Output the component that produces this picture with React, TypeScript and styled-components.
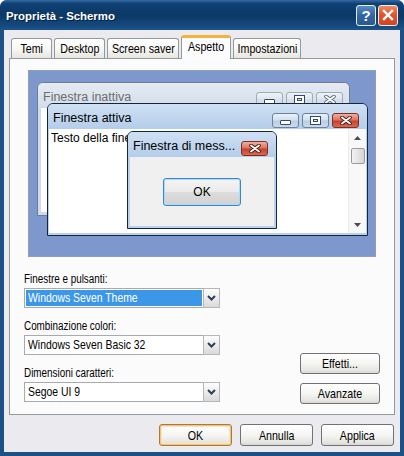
import React from "react";
import styled, { createGlobalStyle, css } from "styled-components";

type Kind = "inactive" | "active" | "message";

const GlobalStyle = createGlobalStyle`
  html, body {
    margin: 0;
    padding: 0;
    background: #ffffff;
  }
  body {
    font-family: "Liberation Sans", Arial, sans-serif;
    color: #000;
  }
`;

// the dialog font is a narrow face; no narrow family is installed, so squeeze the regular one
const Squeeze = styled.span<{ $origin?: string; $k?: number }>`
  display: inline-block;
  white-space: nowrap;
  transform: scaleX(${(p) => p.$k ?? 0.82});
  transform-origin: ${(p) => p.$origin ?? "center"} center;
`;

const Frame = styled.div`
  width: 404px;
  height: 456px;
  display: flex;
  flex-direction: column;
  background: #1d5086;
  border-radius: 7px 7px 0 0;
  overflow: hidden;
`;

const TitleBar = styled.div`
  height: 30px;
  flex: none;
  display: flex;
  align-items: center;
  gap: 2px;
  padding: 0 6px;
  background: linear-gradient(180deg, #3569a2 0%, #0f4174 12%, #0b3866 50%, #164b80 88%, #1f5488 100%);
`;

const Title = styled.div`
  flex: 1;
  color: #fff;
  font: bold 11.4px "Liberation Sans", Arial, sans-serif;
  text-shadow: 1px 1px 0 #06213d;
  padding-top: 1px;
`;

const TitleButton = styled.div<{ $close?: boolean }>`
  width: 20px;
  height: 21px;
  box-sizing: border-box;
  border: 1px solid #e8eef6;
  border-radius: 3px;
  display: flex;
  align-items: center;
  justify-content: center;
  color: #fff;
  font: bold 15px "Liberation Sans", Arial, sans-serif;
  background: ${(p) =>
    p.$close
      ? "linear-gradient(180deg, #f08a64 0%, #e2542c 45%, #d1441e 100%)"
      : "linear-gradient(180deg, #5a8cc4 0%, #33679f 50%, #285a92 100%)"};
`;

const Client = styled.div`
  flex: 1;
  margin: 0 4px 4px;
  background: #ebeaee;
  display: flex;
  flex-direction: column;
  padding: 5px 5px 6px 5px;
`;

const TabRow = styled.div`
  height: 23px;
  display: flex;
  align-items: flex-end;
  gap: 2px;
  padding-left: 2px;
`;

const Tab = styled.div<{ $w: number; $active?: boolean }>`
  width: ${(p) => p.$w}px;
  height: 20px;
  box-sizing: border-box;
  border: 1px solid #919b9c;
  border-bottom: none;
  border-radius: 3px 3px 0 0;
  background: linear-gradient(180deg, #ffffff 0%, #f6f6f3 55%, #e6e5e0 100%);
  display: flex;
  justify-content: center;
  font-size: 13px;
  line-height: 19px;
  ${(p) =>
    p.$active &&
    css`
      height: 24px;
      margin-bottom: -1px;
      position: relative;
      z-index: 1;
      background: #fcfcfe;
      border-top: 3px solid #f5b23c;
      line-height: 17px;
    `}
`;

const Panel = styled.div`
  height: 357px;
  flex: none;
  box-sizing: border-box;
  border: 1px solid #919b9c;
  background: #fbfbfc;
  display: flex;
  flex-direction: column;
  padding: 11px 14px 0 14px;
`;

const Preview = styled.div`
  position: relative;
  width: 348px;
  height: 187px;
  box-sizing: border-box;
  margin-left: 4px;
  border: 1px solid #8e9dc0;
  background: #7e97cd;
  overflow: hidden;
  font: 12px "Liberation Sans", Arial, sans-serif;
`;

const MiniWindow = styled.div<{ $kind: Kind; $x: number; $y: number; $w: number; $h: number }>`
  position: absolute;
  left: ${(p) => p.$x}px;
  top: ${(p) => p.$y}px;
  width: ${(p) => p.$w}px;
  height: ${(p) => p.$h}px;
  box-sizing: border-box;
  display: flex;
  flex-direction: column;
  border: 1px solid ${(p) => (p.$kind === "inactive" ? "#6f7d8f" : "#14263a")};
  border-radius: 6px 6px 0 0;
  background: ${(p) => (p.$kind === "inactive" ? "#cfdbe8" : "#b9d1ec")};
`;

const MiniTitle = styled.div<{ $kind: Kind }>`
  height: 25px;
  flex: none;
  display: flex;
  align-items: flex-start;
  gap: 3px;
  padding: 0 ${(p) => (p.$kind === "inactive" ? 6 : 8)}px 0 5px;
  border-radius: 5px 5px 0 0;
  background: ${(p) =>
    p.$kind === "inactive"
      ? "linear-gradient(180deg, #e4ebf3 0%, #d3dde9 100%)"
      : "linear-gradient(180deg, #cfe0f3 0%, #b4cdea 100%)"};
`;

const MiniCaption = styled.div<{ $kind: Kind }>`
  flex: 1;
  padding-top: 6px;
  line-height: 16px;
  font-size: 12.5px;
  white-space: nowrap;
  color: ${(p) => (p.$kind === "inactive" ? "#6c6c6c" : "#000")};
`;

const CapButton = styled.div<{ $close?: boolean; $dim?: boolean }>`
  width: 27px;
  height: 15px;
  margin-top: 9px;
  box-sizing: border-box;
  border: 1px solid ${(p) => (p.$close && !p.$dim ? "#7d3124" : p.$dim ? "#9eabbb" : "#6e819b")};
  border-radius: 3px;
  display: flex;
  align-items: center;
  justify-content: center;
  background: ${(p) =>
    p.$close && !p.$dim
      ? "linear-gradient(180deg, #efb0a2 0%, #dd7560 45%, #c8412b 55%, #d76b55 100%)"
      : p.$dim
      ? "linear-gradient(180deg, #eef2f7 0%, #dfe6ef 48%, #d2dbe7 52%, #dce4ee 100%)"
      : "linear-gradient(180deg, #eaf1f9 0%, #d2dfee 48%, #bacde4 52%, #cbdaec 100%)"};
`;

const MiniBody = styled.div<{ $kind: Kind }>`
  flex: 1;
  display: flex;
  margin: ${(p) => (p.$kind === "inactive" ? "0 3px 3px" : p.$kind === "active" ? "0 1px 2px" : "0 2px 2px")};
  background: ${(p) => (p.$kind === "message" ? "#f0f0f0" : "#ffffff")};
  ${(p) =>
    p.$kind === "message" &&
    css`
      align-items: center;
      justify-content: center;
    `}
`;

const BodyText = styled.div`
  flex: 1;
  padding: 2px 0 0 2px;
  line-height: 14px;
  white-space: nowrap;
`;

const ScrollBar = styled.div`
  width: 17px;
  display: flex;
  flex-direction: column;
  align-items: center;
  background: #f8f8f8;
  border-left: 1px solid #ececec;
`;

const Thumb = styled.div`
  width: 14px;
  height: 16px;
  margin-top: 8px;
  box-sizing: border-box;
  border: 1px solid #9a9a9a;
  border-radius: 2px;
  background: linear-gradient(90deg, #f4f4f4 0%, #e4e4e4 50%, #d6d6d6 100%);
`;

const Spacer = styled.div`
  flex: 1;
`;

const MsgButton = styled.div`
  width: 78px;
  height: 28px;
  box-sizing: border-box;
  border: 1px solid #3c86c8;
  border-radius: 3px;
  box-shadow: inset 0 0 0 1px #a9dcf6;
  background: linear-gradient(180deg, #f4f4f4 0%, #ebebeb 48%, #dcdcdc 52%, #d2d2d2 100%);
  display: flex;
  align-items: center;
  justify-content: center;
  font-size: 12px;
`;

const Form = styled.div`
  margin-top: 15px;
  display: flex;
  justify-content: space-between;
  align-items: flex-end;
`;

const Fields = styled.div`
  display: flex;
  flex-direction: column;
  gap: 11px;
`;

const Field = styled.div`
  display: flex;
  flex-direction: column;
`;

const Label = styled.div`
  font-size: 12.5px;
  line-height: 15px;
  margin-bottom: 1px;
  white-space: nowrap;
  transform: scaleX(0.79);
  transform-origin: left center;
`;

const Select = styled.div`
  width: 196px;
  height: 20px;
  box-sizing: border-box;
  border: 1px solid #a6abb2;
  background: #fff;
  display: flex;
  padding: 1px 0 1px 1px;
`;

const SelectValue = styled.div<{ $highlight?: boolean }>`
  flex: 1;
  padding-left: 2px;
  font-size: 13px;
  line-height: 16px;
  overflow: hidden;
  background: ${(p) => (p.$highlight ? "#3d97e8" : "transparent")};
  color: ${(p) => (p.$highlight ? "#fff" : "#000")};
`;

const DropButton = styled.div`
  width: 17px;
  height: 20px;
  margin: -2px -1px 0 1px;
  box-sizing: border-box;
  border: 1px solid #b5b7ba;
  background: linear-gradient(180deg, #fdfdfd 0%, #ececec 50%, #d9d9d9 100%);
  display: flex;
  align-items: center;
  justify-content: center;
`;

const SideButtons = styled.div`
  display: flex;
  flex-direction: column;
  gap: 9px;
  margin-bottom: -2px;
`;

const Button = styled.div<{ $w: number; $h?: number; $default?: boolean }>`
  width: ${(p) => p.$w}px;
  height: ${(p) => p.$h ?? 22}px;
  box-sizing: border-box;
  border: 1px solid #6f7277;
  border-radius: 3px;
  background: linear-gradient(180deg, #ffffff 0%, #f5f5f3 50%, #e4e3df 90%, #d6d5d0 100%);
  display: flex;
  align-items: center;
  justify-content: center;
  font-size: 13px;
  ${(p) =>
    p.$default &&
    css`
      border-color: #a77a3e;
      box-shadow: inset 0 0 0 1px #f3c37a, inset 0 0 0 2px #fbe3bb;
    `}
`;

const ButtonRow = styled.div`
  margin-top: 9px;
  display: flex;
  justify-content: flex-end;
  gap: 8px;
  padding-right: 1px;
`;

const MinGlyph = () => (
  <svg width="11" height="5" viewBox="0 0 11 5" style={{ marginTop: 4 }}>
    <rect x="0.5" y="0.5" width="10" height="4" rx="0.5" fill="#fff" stroke="#344a68" />
  </svg>
);

const MaxGlyph = () => (
  <svg width="11" height="9" viewBox="0 0 11 9">
    <rect x="0.5" y="0.5" width="10" height="8" fill="#fff" stroke="#344a68" />
    <rect x="3.5" y="3.5" width="4" height="2" fill="#dfe8f2" stroke="#344a68" />
  </svg>
);

const CloseGlyph = ({ light }: { light?: boolean }) => (
  <svg width="12" height="9" viewBox="0 0 12 9">
    <path d="M2 1.5 L10 7.5 M10 1.5 L2 7.5" stroke={light ? "#5c6b80" : "#4a1a12"} strokeWidth="3.6" strokeLinecap="round" />
    <path d="M2 1.5 L10 7.5 M10 1.5 L2 7.5" stroke="#fff" strokeWidth="1.8" strokeLinecap="round" />
  </svg>
);

const ArrowUp = () => (
  <svg width="7" height="4" viewBox="0 0 7 4" style={{ marginTop: 7 }}>
    <path d="M0 4 L3.5 0 L7 4 Z" fill="#4b4b4b" />
  </svg>
);

const ArrowDown = () => (
  <svg width="7" height="4" viewBox="0 0 7 4" style={{ marginBottom: 6 }}>
    <path d="M0 0 L7 0 L3.5 4 Z" fill="#4b4b4b" />
  </svg>
);

const Chevron = () => (
  <svg width="9" height="6" viewBox="0 0 9 6">
    <path d="M1 1 L4.5 4.5 L8 1" fill="none" stroke="#2c3e5c" strokeWidth="2" />
  </svg>
);

function Captions({ kind }: { kind: Kind }) {
  if (kind === "message") {
    return (
      <CapButton $close>
        <CloseGlyph />
      </CapButton>
    );
  }
  const dim = kind === "inactive";
  return (
    <>
      <CapButton $dim={dim}>
        <MinGlyph />
      </CapButton>
      <CapButton $dim={dim}>
        <MaxGlyph />
      </CapButton>
      <CapButton $close $dim={dim}>
        <CloseGlyph light={dim} />
      </CapButton>
    </>
  );
}

const tabs = [
  { label: "Temi", w: 41 },
  { label: "Desktop", w: 51 },
  { label: "Screen saver", w: 72 },
  { label: "Aspetto", w: 50, active: true },
  { label: "Impostazioni", w: 68 },
];

const fields = [
  { label: "Finestre e pulsanti:", value: "Windows Seven Theme", highlight: true },
  { label: "Combinazione colori:", value: "Windows Seven Basic 32" },
  { label: "Dimensioni caratteri:", value: "Segoe UI 9" },
];

export default function App() {
  return (
    <>
      <GlobalStyle />
      <Frame>
        <TitleBar>
          <Title>Proprietà - Schermo</Title>
          <TitleButton>?</TitleButton>
          <TitleButton $close>
            <svg width="12" height="12" viewBox="0 0 12 12">
              <path d="M2 2 L10 10 M10 2 L2 10" stroke="#fff" strokeWidth="2.4" strokeLinecap="square" />
            </svg>
          </TitleButton>
        </TitleBar>

        <Client>
          <TabRow>
            {tabs.map((t) => (
              <Tab key={t.label} $w={t.w} $active={t.active}>
                <Squeeze>{t.label}</Squeeze>
              </Tab>
            ))}
          </TabRow>

          <Panel>
            <Preview>
              <MiniWindow $kind="inactive" $x={8} $y={11} $w={313} $h={134}>
                <MiniTitle $kind="inactive">
                  <MiniCaption $kind="inactive">Finestra inattiva</MiniCaption>
                  <Captions kind="inactive" />
                </MiniTitle>
                <MiniBody $kind="inactive" />
              </MiniWindow>

              <MiniWindow $kind="active" $x={18} $y={32} $w={321} $h={133}>
                <MiniTitle $kind="active">
                  <MiniCaption $kind="active">Finestra attiva</MiniCaption>
                  <Captions kind="active" />
                </MiniTitle>
                <MiniBody $kind="active">
                  <BodyText>Testo della finestra</BodyText>
                  <ScrollBar>
                    <ArrowUp />
                    <Thumb />
                    <Spacer />
                    <ArrowDown />
                  </ScrollBar>
                </MiniBody>
              </MiniWindow>

              <MiniWindow $kind="message" $x={98} $y={60} $w={150} $h={98}>
                <MiniTitle $kind="message">
                  <MiniCaption $kind="message">Finestra di mess...</MiniCaption>
                  <Captions kind="message" />
                </MiniTitle>
                <MiniBody $kind="message">
                  <MsgButton>OK</MsgButton>
                </MiniBody>
              </MiniWindow>
            </Preview>

            <Form>
              <Fields>
                {fields.map((f) => (
                  <Field key={f.label}>
                    <Label>{f.label}</Label>
                    <Select>
                      <SelectValue $highlight={f.highlight}>
                        <Squeeze $origin="left" $k={0.8}>{f.value}</Squeeze>
                      </SelectValue>
                      <DropButton>
                        <Chevron />
                      </DropButton>
                    </Select>
                  </Field>
                ))}
              </Fields>
              <SideButtons>
                <Button $w={80} $h={21}>
                  <Squeeze>Effetti...</Squeeze>
                </Button>
                <Button $w={80} $h={21}>
                  <Squeeze>Avanzate</Squeeze>
                </Button>
              </SideButtons>
            </Form>
          </Panel>

          <ButtonRow>
            <Button $w={73} $default>
              <Squeeze>OK</Squeeze>
            </Button>
            <Button $w={73}>
              <Squeeze>Annulla</Squeeze>
            </Button>
            <Button $w={73}>
              <Squeeze>Applica</Squeeze>
            </Button>
          </ButtonRow>
        </Client>
      </Frame>
    </>
  );
}
